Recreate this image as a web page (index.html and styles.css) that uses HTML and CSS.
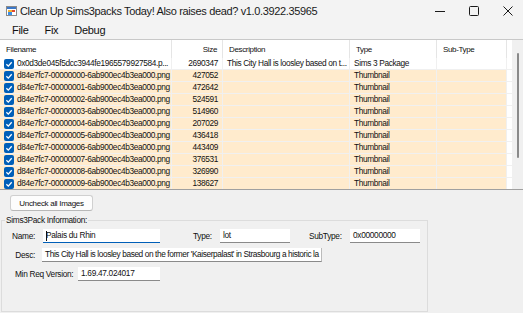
FILE: index.html
```html
<!DOCTYPE html>
<html lang="en">
<head>
    <meta charset="UTF-8">
    <meta name="viewport" content="width=device-width, initial-scale=1.0">
    <title>Clean Up Sims3packs Today!</title>
    <link rel="stylesheet" href="styles.css">
</head>
<body>
    <div class="window">
        <div class="titlebar">
            <svg class="app-icon" width="11" height="10" viewBox="0 0 11 10">
                <rect x="0.5" y="0.5" width="10" height="9" fill="#fff" stroke="#8a8a8a"/>
                <rect x="1" y="1" width="9" height="2" fill="#3c78c8"/>
                <rect x="2" y="4" width="4" height="2" fill="#f2b233"/>
                <rect x="2" y="6" width="4" height="3" fill="#3a8ee6"/>
                <rect x="6" y="4" width="3" height="2" fill="#e0462f"/>
            </svg>
            <span class="title">Clean Up Sims3packs Today! Also raises dead? v1.0.3922.35965</span>
            <div class="controls">
                <svg width="10" height="10" viewBox="0 0 10 10"><path d="M0 5.5h10" stroke="#1a1a1a" stroke-width="1"/></svg>
                <svg width="10" height="10" viewBox="0 0 10 10"><rect x="0.5" y="0.5" width="9" height="9" rx="1" fill="none" stroke="#1a1a1a"/></svg>
                <svg width="10" height="10" viewBox="0 0 10 10"><path d="M0.5 0.5l9 9M9.5 0.5l-9 9" stroke="#1a1a1a" stroke-width="1"/></svg>
            </div>
        </div>

        <div class="menubar">
            <span>File</span>
            <span>Fix</span>
            <span>Debug</span>
        </div>

        <div class="listview">
            <div class="list-body">
                <div class="row head">
                    <div>Filename</div>
                    <div class="num">Size</div>
                    <div>Description</div>
                    <div>Type</div>
                    <div>Sub-Type</div>
                </div>
                <div class="row">
                    <div><span class="check"></span>0x0d3de045f5dcc3944fe1965579927584.p...</div>
                    <div class="num">2690347</div>
                    <div>This City Hall is loosley based on t...</div>
                    <div>Sims 3 Package</div>
                    <div></div>
                </div>
                <div class="row thumb">
                    <div><span class="check"></span>d84e7fc7-00000000-6ab900ec4b3ea000.png</div>
                    <div class="num">427052</div><div></div><div>Thumbnail</div><div></div>
                </div>
                <div class="row thumb">
                    <div><span class="check"></span>d84e7fc7-00000001-6ab900ec4b3ea000.png</div>
                    <div class="num">472642</div><div></div><div>Thumbnail</div><div></div>
                </div>
                <div class="row thumb">
                    <div><span class="check"></span>d84e7fc7-00000002-6ab900ec4b3ea000.png</div>
                    <div class="num">524591</div><div></div><div>Thumbnail</div><div></div>
                </div>
                <div class="row thumb">
                    <div><span class="check"></span>d84e7fc7-00000003-6ab900ec4b3ea000.png</div>
                    <div class="num">514960</div><div></div><div>Thumbnail</div><div></div>
                </div>
                <div class="row thumb">
                    <div><span class="check"></span>d84e7fc7-00000004-6ab900ec4b3ea000.png</div>
                    <div class="num">207029</div><div></div><div>Thumbnail</div><div></div>
                </div>
                <div class="row thumb">
                    <div><span class="check"></span>d84e7fc7-00000005-6ab900ec4b3ea000.png</div>
                    <div class="num">436418</div><div></div><div>Thumbnail</div><div></div>
                </div>
                <div class="row thumb">
                    <div><span class="check"></span>d84e7fc7-00000006-6ab900ec4b3ea000.png</div>
                    <div class="num">443409</div><div></div><div>Thumbnail</div><div></div>
                </div>
                <div class="row thumb">
                    <div><span class="check"></span>d84e7fc7-00000007-6ab900ec4b3ea000.png</div>
                    <div class="num">376531</div><div></div><div>Thumbnail</div><div></div>
                </div>
                <div class="row thumb">
                    <div><span class="check"></span>d84e7fc7-00000008-6ab900ec4b3ea000.png</div>
                    <div class="num">326990</div><div></div><div>Thumbnail</div><div></div>
                </div>
                <div class="row thumb">
                    <div><span class="check"></span>d84e7fc7-00000009-6ab900ec4b3ea000.png</div>
                    <div class="num">138627</div><div></div><div>Thumbnail</div><div></div>
                </div>
            </div>
            <div class="scrollbar"><div class="thumb-bar"></div></div>
        </div>

        <div class="bottom">
            <button class="btn">Uncheck all Images</button>
            <fieldset class="info">
                <legend>Sims3Pack Information:</legend>
                <div class="field-row">
                    <label class="lbl lbl-name">Name:</label>
                    <div class="textbox tb-name"><span class="caret"></span>Palais du Rhin</div>
                    <label class="lbl lbl-type">Type:</label>
                    <div class="textbox tb-type">lot</div>
                    <label class="lbl lbl-sub">SubType:</label>
                    <div class="textbox tb-sub">0x00000000</div>
                </div>
                <div class="field-row">
                    <label class="lbl lbl-desc">Desc:</label>
                    <div class="textbox tb-desc">This City Hall is loosley based on the former 'Kaiserpalast' in Strasbourg a historic la</div>
                </div>
                <div class="field-row">
                    <label class="lbl lbl-ver">Min Req Version:</label>
                    <div class="textbox tb-ver">1.69.47.024017</div>
                </div>
            </fieldset>
        </div>
    </div>
</body>
</html>
```

FILE: styles.css
```css
* {
    box-sizing: border-box;
}
body {
    margin: 0;
    font-family: "Liberation Sans", Arial, sans-serif;
    color: #111;
    background: #f0f0f0;
}
.window {
    width: 523px;
    height: 313px;
    background: #f0f0f0;
    overflow: hidden;
}

/* title bar */
.titlebar {
    height: 21px;
    display: flex;
    align-items: center;
    padding-left: 6px;
    background: #f3f3f3;
}
.app-icon {
    margin-right: 3px;
}
.title {
    font-size: 11px;
    letter-spacing: -0.35px;
    color: #1a1a1a;
}
.controls {
    margin-left: auto;
    display: flex;
    gap: 24px;
    padding-right: 10px;
}

/* menu */
.menubar {
    height: 18px;
    display: flex;
    align-items: center;
    padding-left: 4px;
    font-size: 11px;
    letter-spacing: -0.3px;
    background: #f3f3f3;
}
.menubar span {
    padding: 0 8px;
}

/* list view */
.listview {
    height: 151px;
    display: flex;
    background: #fff;
    border-top: 1px solid #c8c8c8;
    border-bottom: 1px solid #a0a0a0;
}
.list-body {
    width: 512px;
    overflow: hidden;
}
.row {
    display: grid;
    grid-template-columns: 172px 51px 127px 87px 70px;
    height: 12px;
    font-size: 8.3px;
    letter-spacing: -0.35px;
    line-height: 11px;
    border-bottom: 1px solid #f0f0f0;
}
.row > div {
    border-right: 1px solid #f0f0f0;
    white-space: nowrap;
    overflow: hidden;
    padding-left: 4px;
    display: flex;
    align-items: center;
}
.row > div.num {
    justify-content: flex-end;
    padding-left: 0;
    padding-right: 4px;
}
.row.head {
    height: 18px;
    font-size: 8px;
    border-bottom: 0;
}
.row.head > div {
    border-right-color: #e5e5e5;
    padding-left: 6px;
}
.row.head > div.num {
    padding-right: 5px;
}
.row.thumb > div {
    background: #ffebcd;
}
.check {
    flex: none;
    width: 10px;
    height: 10px;
    margin: 0 3px 0 0;
    border-radius: 2px;
    background: #005fb8 url("data:image/svg+xml;utf8,<svg xmlns='http://www.w3.org/2000/svg' width='10' height='10'><path d='M2.4 5.2l1.9 1.9 3.4-3.9' fill='none' stroke='white' stroke-width='1.3'/></svg>") no-repeat;
}
.scrollbar {
    width: 11px;
    background: #f0f0f0;
    padding: 13px 0 0 5px;
}
.thumb-bar {
    width: 2px;
    height: 105px;
    background: #8a8a8a;
    border-radius: 1px;
}

/* lower panel */
.bottom {
    padding-top: 5px;
}
.btn {
    display: block;
    margin-left: 10px;
    width: 83px;
    height: 16px;
    padding: 0;
    font-family: inherit;
    font-size: 8px;
    letter-spacing: -0.3px;
    color: #111;
    background: #fdfdfd;
    border: 1px solid #d0d0d0;
    border-bottom-color: #b8b8b8;
    border-radius: 3px;
}
.info {
    margin: 4px 0 0 1px;
    width: 427px;
    height: 97px;
    padding: 4px 0 0 0;
    border: 1px solid #dcdcdc;
    font-size: 8.3px;
    letter-spacing: -0.3px;
}
.info legend {
    padding: 0 1px;
    margin-left: 3px;
    line-height: 10px;
}
.field-row {
    display: flex;
    align-items: center;
    height: 14px;
    margin-bottom: 5px;
}
.lbl {
    flex: none;
    white-space: nowrap;
}
.lbl-name {
    width: 33px;
    text-align: right;
    margin-right: 8px;
}
.lbl-type {
    width: 27px;
    margin-left: 33px;
}
.lbl-sub {
    width: 41px;
    margin-left: 19px;
}
.lbl-desc {
    width: 33px;
    text-align: right;
    margin-right: 7px;
}
.lbl-ver {
    margin-left: 13px;
    width: 63px;
}
.textbox {
    height: 14px;
    line-height: 13px;
    padding-left: 3px;
    background: #fff;
    border-bottom: 1px solid #8a8a8a;
    white-space: nowrap;
    overflow: hidden;
    display: flex;
    align-items: center;
}
.tb-name { width: 117px; border-bottom-color: #005fb8; }
.tb-type { width: 70px; }
.tb-sub { width: 70px; }
.tb-desc { width: 280px; border-right: 1px solid #bbb; letter-spacing: -0.4px; }
.tb-ver { width: 82px; }
.caret {
    width: 1px;
    height: 10px;
    background: #111;
    margin-right: -1px;
}
```
